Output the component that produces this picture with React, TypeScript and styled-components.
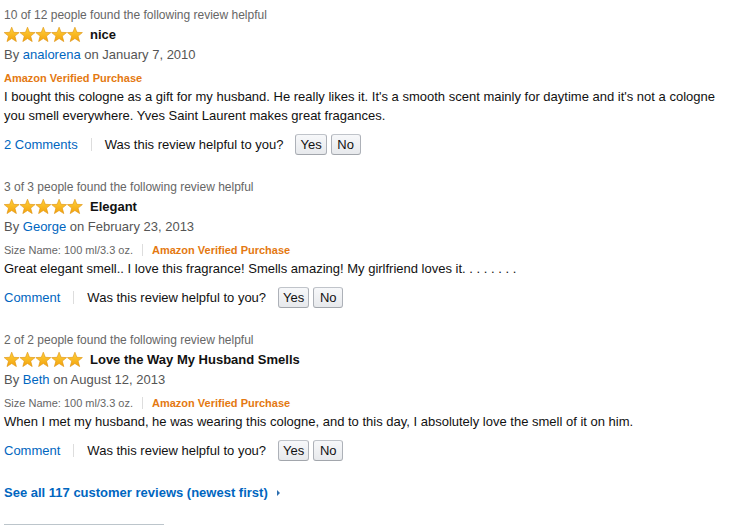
import React from "react";
import styled, { createGlobalStyle } from "styled-components";

const GlobalStyle = createGlobalStyle`
  html, body {
    margin: 0;
    padding: 0;
    background: #ffffff;
    font-family: "Liberation Sans", Arial, Helvetica, sans-serif;
    color: #111111;
  }
`;

const Page = styled.div`
  width: 724px;
  padding: 4px 0 0 4px;
  display: flex;
  flex-direction: column;
`;

const Review = styled.section`
  display: flex;
  flex-direction: column;
  margin-bottom: 21px;
`;

const HelpfulCount = styled.div`
  font-size: 12px;
  line-height: 20px;
  padding-top: 1px;
  height: 20px;
  box-sizing: border-box;
  color: #666666;
`;

const TitleRow = styled.div`
  display: flex;
  align-items: center;
  gap: 7px;
  height: 20px;
`;

const Title = styled.span`
  font-size: 13px;
  font-weight: bold;
  color: #111111;
`;

const Byline = styled.div`
  font-size: 13px;
  line-height: 21px;
  color: #555555;
`;

const Link = styled.a<{ $bold?: boolean }>`
  color: #0066c0;
  text-decoration: none;
  font-weight: ${(p) => (p.$bold ? "bold" : "normal")};
  cursor: pointer;
`;

const MetaRow = styled.div`
  display: flex;
  align-items: center;
  margin-top: 4px;
  height: 18px;
  font-size: 11px;
`;

const MetaText = styled.span`
  color: #666666;
`;

const Verified = styled.span`
  color: #e47911;
  font-weight: bold;
`;

const Divider = styled.span<{ $gap: number; $height: number }>`
  display: inline-block;
  width: 1px;
  height: ${(p) => p.$height}px;
  background: #dddddd;
  margin: 0 ${(p) => p.$gap}px;
`;

const Body = styled.p`
  margin: 0;
  font-size: 13px;
  line-height: 19px;
  color: #111111;
`;

const Actions = styled.div`
  display: flex;
  align-items: center;
  height: 22px;
  margin-top: 8px;
  font-size: 13px;
`;

const Question = styled.span`
  color: #111111;
  margin-right: 12px;
`;

const VoteButton = styled.button`
  height: 21px;
  min-width: 30px;
  padding: 0 4px;
  margin-right: 4px;
  border: 1px solid #adb1b8;
  border-top-color: #c0c4ca;
  border-bottom-color: #a2a6ac;
  border-radius: 3px;
  background: linear-gradient(to bottom, #f7f8fa, #e7e9ec);
  font-family: inherit;
  font-size: 13px;
  color: #111111;
  line-height: 19px;
  cursor: pointer;
`;

const SeeAllRow = styled.div`
  display: flex;
  align-items: center;
  gap: 9px;
  font-size: 13px;
  line-height: 21px;
`;

const Caret = styled.span`
  display: inline-block;
  width: 0;
  height: 0;
  border-top: 3px solid transparent;
  border-bottom: 3px solid transparent;
  border-left: 3px solid #2d6fb0;
`;

const Rule = styled.div`
  width: 160px;
  height: 1px;
  margin-top: 21px;
  background: #bcc5cb;
`;

const STAR_PATH =
  "M7.7 0.2 L9.7 5.3 L15.2 5.6 L10.9 9.1 L12.4 14.6 L7.7 11.5 L3.0 14.6 L4.5 9.1 L0.2 5.6 L5.7 5.3Z";

const Stars: React.FC = () => (
  <svg width="79" height="15" viewBox="0 0 79 15" aria-label="5 out of 5 stars">
    <defs>
      <linearGradient id="starFill" x1="0" y1="0" x2="0" y2="1">
        <stop offset="0" stopColor="#ffd23c" />
        <stop offset="1" stopColor="#f3a20c" />
      </linearGradient>
    </defs>
    {[0, 1, 2, 3, 4].map((i) => (
      <path
        key={i}
        d={STAR_PATH}
        transform={`translate(${i * 15.8} 0)`}
        fill="url(#starFill)"
        stroke="#dd900c"
        strokeWidth="0.6"
        strokeLinejoin="round"
      />
    ))}
  </svg>
);

type ReviewData = {
  helpful: string;
  title: string;
  author: string;
  date: string;
  size?: string;
  body: string;
  comments: string;
};

const reviews: ReviewData[] = [
  {
    helpful: "10 of 12 people found the following review helpful",
    title: "nice",
    author: "analorena",
    date: "January 7, 2010",
    body:
      "I bought this cologne as a gift for my husband. He really likes it. It's a smooth scent mainly for daytime and it's not a cologne you smell everywhere. Yves Saint Laurent makes great fragances.",
    comments: "2 Comments",
  },
  {
    helpful: "3 of 3 people found the following review helpful",
    title: "Elegant",
    author: "George",
    date: "February 23, 2013",
    size: "Size Name: 100 ml/3.3 oz.",
    body: "Great elegant smell.. I love this fragrance! Smells amazing! My girlfriend loves it. . . . . . . .",
    comments: "Comment",
  },
  {
    helpful: "2 of 2 people found the following review helpful",
    title: "Love the Way My Husband Smells",
    author: "Beth",
    date: "August 12, 2013",
    size: "Size Name: 100 ml/3.3 oz.",
    body:
      "When I met my husband, he was wearing this cologne, and to this day, I absolutely love the smell of it on him.",
    comments: "Comment",
  },
];

const ReviewBlock: React.FC<{ r: ReviewData }> = ({ r }) => (
  <Review>
    <HelpfulCount>{r.helpful}</HelpfulCount>
    <TitleRow>
      <Stars />
      <Title>{r.title}</Title>
    </TitleRow>
    <Byline>
      By <Link>{r.author}</Link> on {r.date}
    </Byline>
    <MetaRow>
      {r.size && (
        <>
          <MetaText>{r.size}</MetaText>
          <Divider $gap={9} $height={12} />
        </>
      )}
      <Verified>Amazon Verified Purchase</Verified>
    </MetaRow>
    <Body>{r.body}</Body>
    <Actions>
      <Link>{r.comments}</Link>
      <Divider $gap={13} $height={13} />
      <Question>Was this review helpful to you?</Question>
      <VoteButton>Yes</VoteButton>
      <VoteButton>No</VoteButton>
    </Actions>
  </Review>
);

export default function App() {
  return (
    <>
      <GlobalStyle />
      <Page>
        {reviews.map((r) => (
          <ReviewBlock key={r.title} r={r} />
        ))}
        <SeeAllRow>
          <Link $bold>See all 117 customer reviews (newest first)</Link>
          <Caret />
        </SeeAllRow>
        <Rule />
      </Page>
    </>
  );
}
